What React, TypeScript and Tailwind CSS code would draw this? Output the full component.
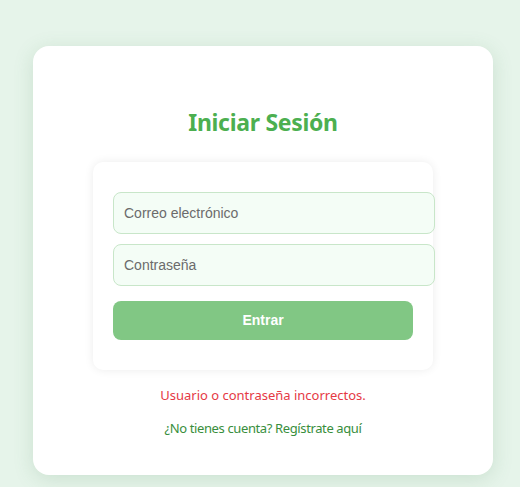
import React from "react";

export default function App() {
  return (
    <div className="min-h-[487px] w-[520px] bg-[#e6f4ea] pt-[46px] pb-[12px]" style={{ fontFamily: '"Noto Sans", sans-serif' }}>
      <div className="ml-[33px] w-[460px] h-[429px] bg-white rounded-[16px] shadow-[0_4px_20px_rgba(76,140,90,0.18)] flex flex-col items-center pt-[60px]">
        <h2 className="text-[23px] leading-[32px] font-bold text-[#4caf50] tracking-[-0.3px]">Iniciar Sesión</h2>
        <div className="mt-[24px] w-[340px] h-[208px] bg-white rounded-[10px] shadow-[0_0_10px_rgba(0,0,0,0.08)] px-[20px] pt-[30px]">
          <div
            className="w-[322px] h-[42px] rounded-[8px] border border-[#c8e6c9] bg-[#f4fdf6] px-[10px] flex items-center text-[14px] text-[#6b6b6b]"
            style={{ fontFamily: '"Liberation Sans", Arial, sans-serif' }}
          >
            Correo electrónico
          </div>
          <div
            className="mt-[10px] w-[322px] h-[42px] rounded-[8px] border border-[#c8e6c9] bg-[#f4fdf6] px-[10px] flex items-center text-[14px] text-[#6b6b6b]"
            style={{ fontFamily: '"Liberation Sans", Arial, sans-serif' }}
          >
            Contraseña
          </div>
          <div
            className="mt-[15px] w-[300px] h-[39px] rounded-[8px] bg-[#81c784] flex items-center justify-center text-white font-bold text-[14px]"
            style={{ fontFamily: '"Liberation Sans", Arial, sans-serif' }}
          >
            Entrar
          </div>
        </div>
        <p className="mt-[15px] text-[13px] leading-[20px] text-[#e53945]">Usuario o contraseña incorrectos.</p>
        <p className="mt-[13px] text-[13px] leading-[20px] text-[#388e3c] tracking-[-0.38px]">¿No tienes cuenta? Regístrate aquí</p>
      </div>
    </div>
  );
}
